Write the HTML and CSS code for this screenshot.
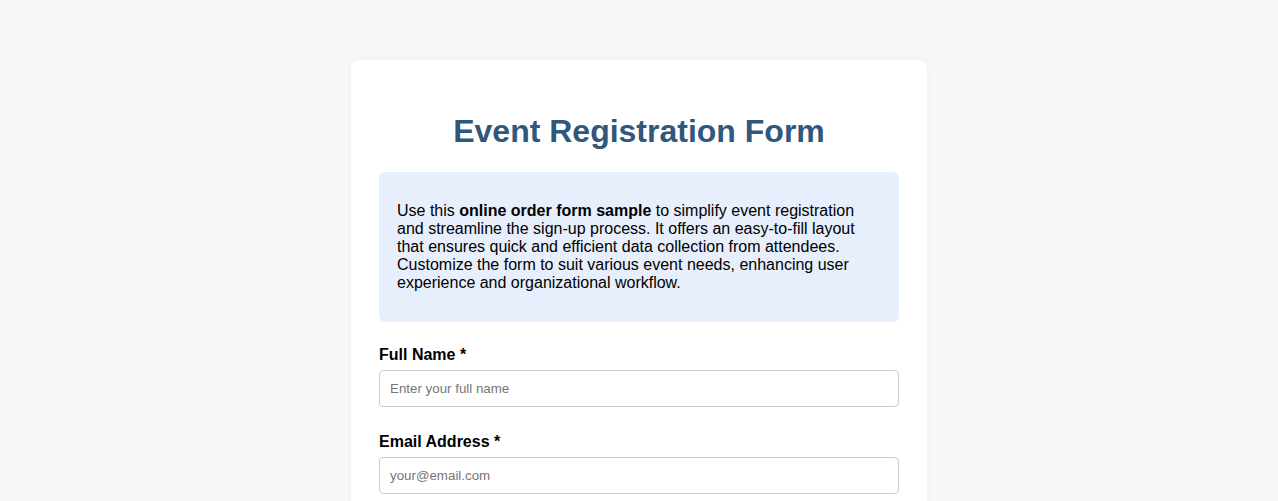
FILE: index.html
```html
<!DOCTYPE html>
<html lang="en">
<head>
<meta charset="utf-8">
<title>Event Registration Form</title>
<link rel="stylesheet" href="styles.css">
</head>
<body>
<main class="card">
  <h1 class="title">Event Registration Form</h1>
  <div class="intro">
    <p>Use this <strong>online order form sample</strong> to simplify event registration and streamline the sign-up process. It offers an easy-to-fill layout that ensures quick and efficient data collection from attendees. Customize the form to suit various event needs, enhancing user experience and organizational workflow.</p>
  </div>
  <form class="form">
    <div class="field">
      <label class="label" for="name">Full Name *</label>
      <input class="input" id="name" type="text" placeholder="Enter your full name">
    </div>
    <div class="field">
      <label class="label" for="email">Email Address *</label>
      <input class="input" id="email" type="email" placeholder="your@email.com">
    </div>
  </form>
</main>
</body>
</html>
```

FILE: styles.css
```css
html, body {
  margin: 0;
  padding: 0;
}

body {
  background: #f7f7f7;
  font-family: "Liberation Sans", Arial, sans-serif;
  font-size: 16px;
  color: #000;
  padding: 60px 20px 40px;
}

.card {
  width: 520px;
  margin: 0 auto;
  padding: 28px;
  background: #ffffff;
  border-radius: 8px;
  box-shadow: 0 0 6px rgba(0, 0, 0, 0.04);
}

.title {
  margin: 25px 0 22px;
  font-size: 32px;
  font-weight: bold;
  text-align: center;
  color: #30577d;
  line-height: normal;
}

.intro {
  background: #e8effc;
  border-radius: 6px;
  padding: 14px 18px;
}

.intro p {
  margin: 16px 0;
  line-height: 18px;
}

.form {
  margin-top: 24px;
}

.field {
  display: flex;
  flex-direction: column;
  margin-bottom: 26px;
}

.label {
  font-weight: bold;
  line-height: 18px;
  margin-bottom: 6px;
}

.input {
  font-family: "Liberation Sans", Arial, sans-serif;
  font-size: 13.33px;
  padding: 10px;
  border: 1px solid #cccccc;
  border-radius: 4px;
  background: #fff;
  color: #000;
  outline: none;
}

.input::placeholder {
  color: #767676;
}
```
